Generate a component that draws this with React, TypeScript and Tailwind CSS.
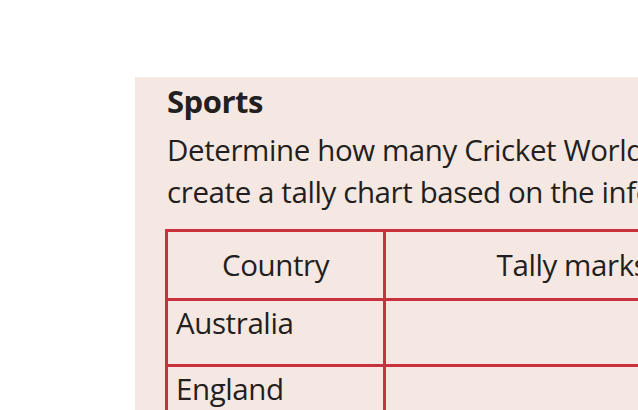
export default function App() {
  return (
    <div className="w-[638px] h-[410px] overflow-hidden bg-white" style={{ fontFamily: '"Open Sans", "Liberation Sans", sans-serif' }}>
      <div className="ml-[135px] mt-[77px] w-[700px] h-[400px] bg-[#f5e8e2] pl-[32px] pt-[5px] text-[#231f20]">
        <h2 className="text-[31px] leading-[38px] font-bold tracking-[-0.5px]">Sports</h2>
        <p className="text-[29.5px] leading-[42px] whitespace-nowrap tracking-[-0.4px] mt-[9px]">
          Determine how many Cricket World Cups each country has won and
          <br />
          create a tally chart based on the information.
        </p>
        <table className="-ml-[2px] mt-[16px] border-collapse border-[3px] border-[#c8323c] text-[29.5px] tracking-[-0.4px]">
          <tbody>
            <tr className="h-[69px]">
              <td className="w-[218px] border-[3px] border-[#c8323c] text-center align-middle">Country</td>
              <td className="w-[375px] border-[3px] border-[#c8323c] text-center align-middle">Tally marks</td>
            </tr>
            <tr className="h-[66px]">
              <td className="border-[3px] border-[#c8323c] align-top px-[8px]">Australia</td>
              <td className="border-[3px] border-[#c8323c]"></td>
            </tr>
            <tr className="h-[66px]">
              <td className="border-[3px] border-[#c8323c] align-top px-[8px]">England</td>
              <td className="border-[3px] border-[#c8323c]"></td>
            </tr>
          </tbody>
        </table>
      </div>
    </div>
  )
}
